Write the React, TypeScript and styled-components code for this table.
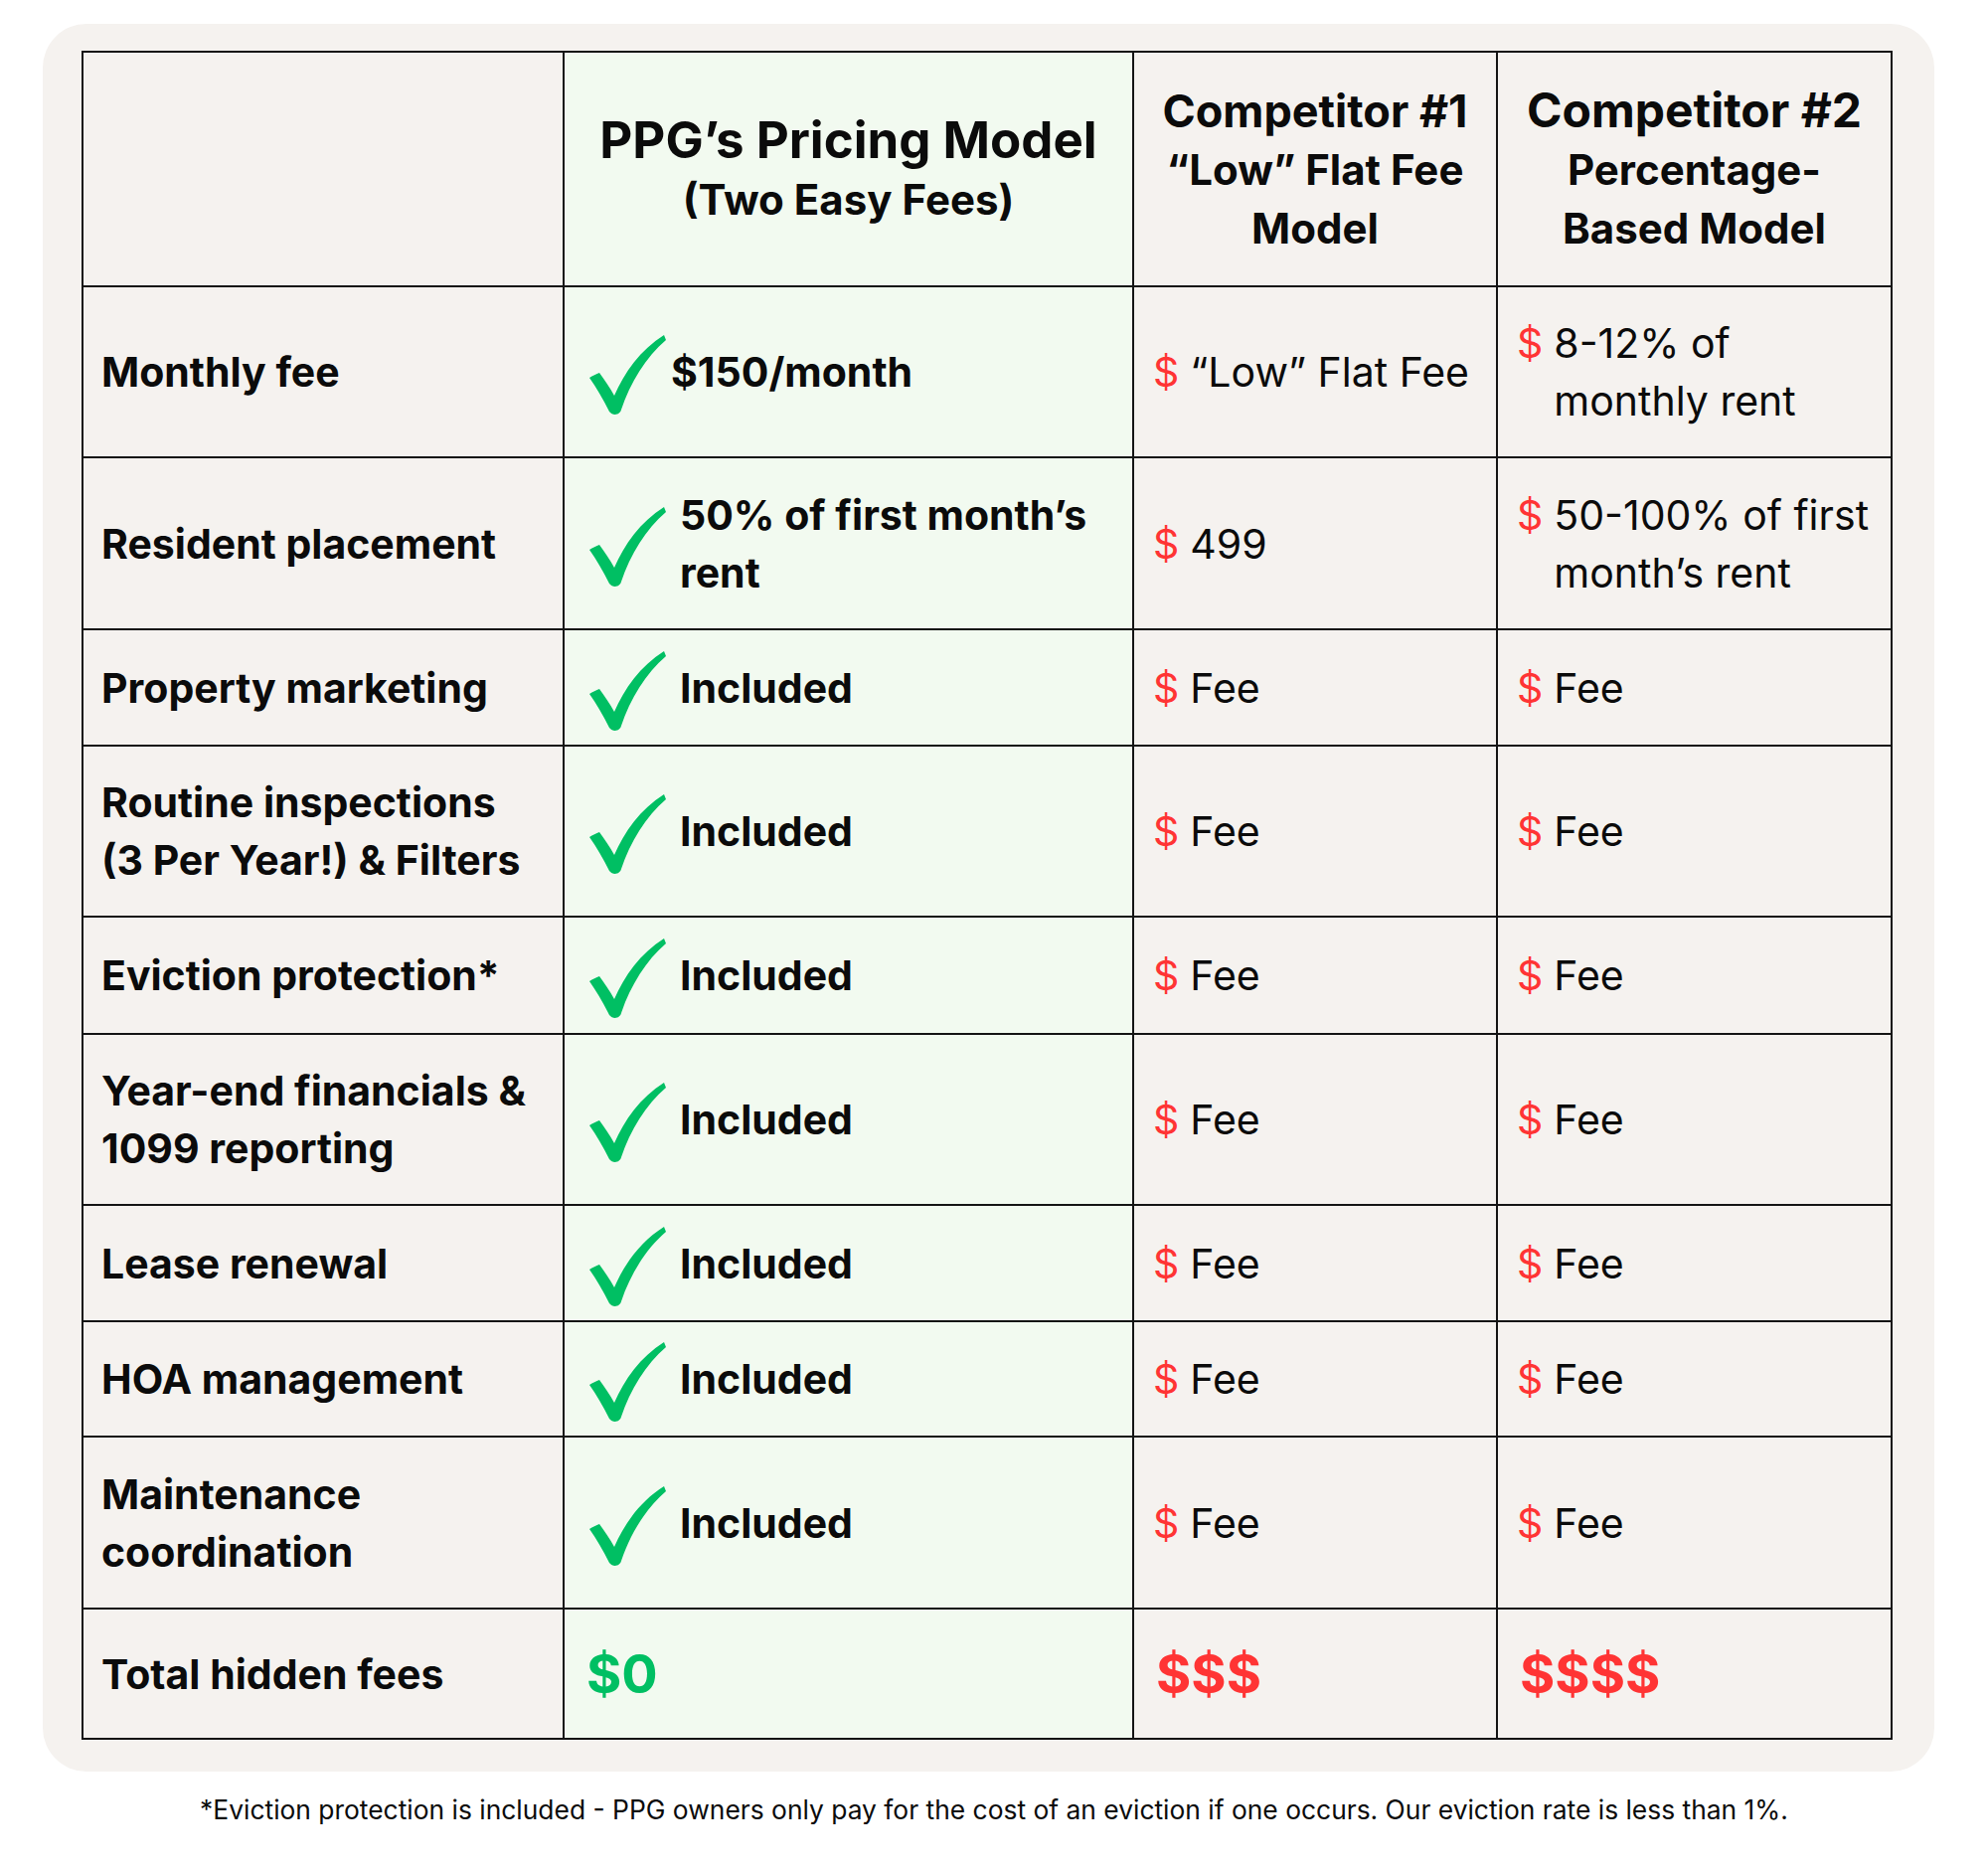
import React from "react";
import styled, { createGlobalStyle } from "styled-components";

const Global = createGlobalStyle`
  html, body { margin: 0; padding: 0; background: #ffffff; }
  body { font-family: Inter, "Noto Sans", "Liberation Sans", sans-serif; color: #0b0b0b; }
`;

const Page = styled.div`
  width: 2000px;
  display: flex;
  flex-direction: column;
  padding-top: 24px;
`;

const Card = styled.div`
  margin-left: 43px;
  width: 1903px;
  box-sizing: border-box;
  padding: 27px 42px 32px 39px;
  background: #f5f2ef;
  border-radius: 44px;
`;

const Grid = styled.div`
  display: grid;
  grid-template-columns: 482px 571px 364px 395px;
  grid-template-rows: 234px 170px 171px 115px 170px 116px 170px 115px 114px 171px 129px;
  gap: 2px;
  padding: 2px;
  background: #141414;
`;

const Cell = styled.div<{ $green?: boolean }>`
  background: ${(p) => (p.$green ? "#f2faf0" : "#f5f2ef")};
  display: flex;
  align-items: center;
  box-sizing: border-box;
  min-width: 0;
`;

const HeadCell = styled(Cell)`
  flex-direction: column;
  justify-content: center;
  text-align: center;
  font-weight: 700;
`;

const HeadLine = styled.div<{ $size: number; $lh: number }>`
  font-size: ${(p) => p.$size}px;
  line-height: ${(p) => p.$lh}px;
  white-space: nowrap;
`;

const LabelCell = styled(Cell)`
  padding: 0 18px;
  font-weight: 700;
  font-size: 41px;
  line-height: 58px;
  white-space: nowrap;
`;

const PpgCell = styled(Cell)`
  padding-left: 24px;
  font-weight: 700;
  font-size: 41px;
  line-height: 58px;
  white-space: nowrap;
`;

const CheckWrap = styled.div<{ $tight?: boolean }>`
  flex: none;
  width: 80px;
  height: 82px;
  margin-top: 8px;
  margin-right: ${(p) => (p.$tight ? "3px" : "12px")};
  display: flex;
`;

const CompCell = styled(Cell)`
  padding-left: 19px;
  font-weight: 400;
  font-size: 41px;
  line-height: 58px;
  white-space: nowrap;
`;

const CompInner = styled.div`
  display: flex;
  align-items: flex-start;
`;

const Dollar = styled.span`
  color: #ff3434;
  flex: none;
  margin-right: 11px;
`;

const TotalValue = styled.div<{ $color: string }>`
  color: ${(p) => p.$color};
  font-weight: 700;
  font-size: 54px;
  line-height: 60px;
`;

const TotalCell = styled(Cell)`
  padding-left: 22px;
`;

const Footnote = styled.div`
  width: 2000px;
  text-align: center;
  margin-top: 22px;
  font-size: 26.4px;
  line-height: 32px;
  font-weight: 400;
  color: #0b0b0b;
`;

const Check = () => (
  <svg width="80" height="82" viewBox="0 0 80 82">
    <path
      d="M1 43 C4 41 8 39 11 38 C16 45 21 52 26 61 C36 38 52 15 76 0 L78 5 C58 22 42 48 33 75 C32 80 25 82 21 77 C15 65 8 53 1 43 Z"
      fill="#00bf63"
    />
  </svg>
);

type Row = {
  label: React.ReactNode;
  ppg: React.ReactNode;
  tight?: boolean;
  c1: React.ReactNode;
  c2: React.ReactNode;
};

const rows: Row[] = [
  {
    label: "Monthly fee",
    ppg: "$150/month",
    tight: true,
    c1: "“Low” Flat Fee",
    c2: (
      <>
        8-12% of
        <br />
        monthly rent
      </>
    ),
  },
  {
    label: "Resident placement",
    ppg: (
      <>
        50% of first month’s
        <br />
        rent
      </>
    ),
    c1: "499",
    c2: (
      <>
        50-100% of first
        <br />
        month’s rent
      </>
    ),
  },
  { label: "Property marketing", ppg: "Included", c1: "Fee", c2: "Fee" },
  {
    label: (
      <>
        Routine inspections
        <br />
        (3 Per Year!) &amp; Filters
      </>
    ),
    ppg: "Included",
    c1: "Fee",
    c2: "Fee",
  },
  { label: "Eviction protection*", ppg: "Included", c1: "Fee", c2: "Fee" },
  {
    label: (
      <>
        Year-end financials &amp;
        <br />
        1099 reporting
      </>
    ),
    ppg: "Included",
    c1: "Fee",
    c2: "Fee",
  },
  { label: "Lease renewal", ppg: "Included", c1: "Fee", c2: "Fee" },
  { label: "HOA management", ppg: "Included", c1: "Fee", c2: "Fee" },
  {
    label: (
      <>
        Maintenance
        <br />
        coordination
      </>
    ),
    ppg: "Included",
    c1: "Fee",
    c2: "Fee",
  },
];

export default function App() {
  return (
    <>
      <Global />
      <Page>
        <Card>
          <Grid>
            <HeadCell />
            <HeadCell $green>
              <HeadLine $size={51} $lh={62}>PPG’s Pricing Model</HeadLine>
              <HeadLine $size={42} $lh={58}>(Two Easy Fees)</HeadLine>
            </HeadCell>
            <HeadCell>
              <HeadLine $size={45} $lh={59}>Competitor #1</HeadLine>
              <HeadLine $size={42} $lh={59}>“Low” Flat Fee</HeadLine>
              <HeadLine $size={42} $lh={59}>Model</HeadLine>
            </HeadCell>
            <HeadCell>
              <HeadLine $size={48} $lh={60}>Competitor #2</HeadLine>
              <HeadLine $size={42} $lh={59}>Percentage-</HeadLine>
              <HeadLine $size={42} $lh={59}>Based Model</HeadLine>
            </HeadCell>

            {rows.map((r, i) => (
              <React.Fragment key={i}>
                <LabelCell>
                  <div>{r.label}</div>
                </LabelCell>
                <PpgCell $green>
                  <CheckWrap $tight={r.tight}>
                    <Check />
                  </CheckWrap>
                  <div>{r.ppg}</div>
                </PpgCell>
                <CompCell>
                  <CompInner>
                    <Dollar>$</Dollar>
                    <div>{r.c1}</div>
                  </CompInner>
                </CompCell>
                <CompCell>
                  <CompInner>
                    <Dollar>$</Dollar>
                    <div>{r.c2}</div>
                  </CompInner>
                </CompCell>
              </React.Fragment>
            ))}

            <LabelCell>
              <div>Total hidden fees</div>
            </LabelCell>
            <TotalCell $green>
              <TotalValue $color="#00bf63">$0</TotalValue>
            </TotalCell>
            <TotalCell>
              <TotalValue $color="#ff3434">$$$</TotalValue>
            </TotalCell>
            <TotalCell>
              <TotalValue $color="#ff3434">$$$$</TotalValue>
            </TotalCell>
          </Grid>
        </Card>
        <Footnote>
          *Eviction protection is included - PPG owners only pay for the cost of an eviction if one occurs. Our eviction rate is less than 1%.
        </Footnote>
      </Page>
    </>
  );
}
